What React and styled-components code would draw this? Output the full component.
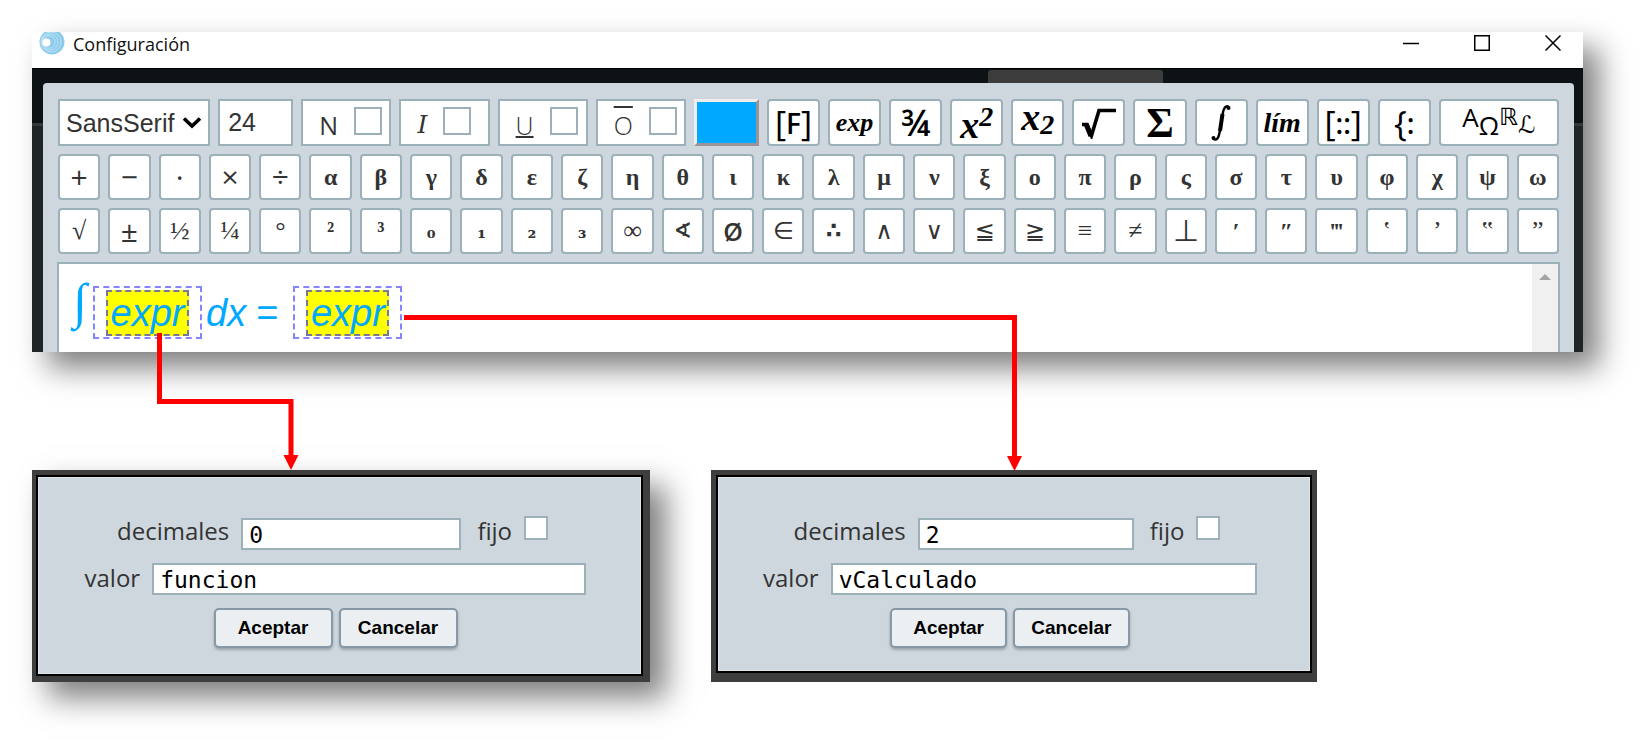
import { useState } from "react";
import styled, { createGlobalStyle } from "styled-components";

const TEXT = `"Open Sans", "Noto Sans", sans-serif`;
const SERIF = `"Liberation Serif", "DejaVu Serif", serif`;
const SANS = `"Liberation Sans", Arial, sans-serif`;
const MONO = `"DejaVu Sans Mono", monospace`;

const greekRow = [
  { char: "+", face: "operator" },
  { char: "−", face: "operator" },
  { char: "·", face: "operator" },
  { char: "×", face: "operator" },
  { char: "÷", face: "operator" },
  ..."αβγδεζηθικλμνξοπρςστυφχψω".split("").map((char) => ({ char, face: "bold" })),
];

const symbolRow = [
  { char: "√", face: "thin" },
  { char: "±", face: "operator" },
  { char: "½", face: "thin" },
  { char: "¼", face: "thin" },
  { char: "°", face: "thin" },
  { char: "²", face: "bold" },
  { char: "³", face: "bold" },
  { char: "₀", face: "sub" },
  { char: "₁", face: "sub" },
  { char: "₂", face: "sub" },
  { char: "₃", face: "sub" },
  { char: "∞", face: "thin" },
  { char: "∢", face: "mathBold" },
  { char: "Ø", face: "letter" },
  { char: "∈", face: "math" },
  { char: "∴", face: "mathBold" },
  { char: "∧", face: "math" },
  { char: "∨", face: "math" },
  { char: "≦", face: "math" },
  { char: "≧", face: "math" },
  { char: "≡", face: "thin" },
  { char: "≠", face: "thin" },
  { char: "⊥", face: "wide" },
  { char: "′", face: "bold" },
  { char: "″", face: "bold" },
  { char: "‴", face: "bold" },
  { char: "‛", face: "thin" },
  { char: "’", face: "thin" },
  { char: "‟", face: "thin" },
  { char: "”", face: "thin" },
];

const styleToggles = [
  { id: "bold", mark: "N" },
  { id: "italic", mark: "I" },
  { id: "underline", mark: "U" },
  { id: "overline", mark: "O" },
];

const Toolbar = () => {
  const [font, setFont] = useState("SansSerif");
  const [size, setSize] = useState("24");

  return (
    <>
      <FormatRow>
        <SelectBox>
          <select
            aria-label="fuente"
            value={font}
            onChange={(e) => setFont(e.target.value)}
          >
            <option>SansSerif</option>
            <option>Serif</option>
            <option>Monospaced</option>
          </select>
          <svg width="20" height="13" viewBox="0 0 20 13">
            <path d="M2 2.5l8 7.5 8-7.5" fill="none" stroke="#000" strokeWidth="3.6" />
          </svg>
        </SelectBox>
        <SizeInput
          aria-label="tamaño"
          value={size}
          onChange={(e) => setSize(e.target.value)}
        />
        {styleToggles.map(({ id, mark }) => (
          <Toggle key={id}>
            <Mark $kind={id}>{mark}</Mark>
            <input type="checkbox" />
          </Toggle>
        ))}
        <ColorButton aria-label="color" />
        <ToolButton>
          <Fence>[</Fence>F<Fence>]</Fence>
        </ToolButton>
        <ToolButton>
          <MathText $size={26}>exp</MathText>
        </ToolButton>
        <ToolButton>
          <Fraction>¾</Fraction>
        </ToolButton>
        <ToolButton>
          <Script>
            <MathText $size={38} $align="flex-end">x</MathText>
            <MathText $size={28} $align="flex-start">2</MathText>
          </Script>
        </ToolButton>
        <ToolButton>
          <Script>
            <MathText $size={38} $align="flex-start">x</MathText>
            <MathText $size={28} $align="flex-end">2</MathText>
          </Script>
        </ToolButton>
        <ToolButton aria-label="raíz">
          <svg width="36" height="32" viewBox="0 0 36 32">
            <path d="M1 17.5h5l4.5 11L18 3.5h17" fill="none" stroke="#000" strokeWidth="3.6" />
            <path d="M5 17l5 12" stroke="#000" strokeWidth="5" />
          </svg>
        </ToolButton>
        <ToolButton>
          <MathText $size={42} $upright>Σ</MathText>
        </ToolButton>
        <ToolButton aria-label="integral">
          <svg width="20" height="38" viewBox="0 0 20 38">
            <path
              d="M2 34.500C6 38 8 33 9 26L11.500 11C12.500 4 15 0 18.500 3.500"
              fill="none"
              stroke="#000"
              strokeWidth="2.4"
            />
            <path d="M9 27L11.500 10" stroke="#000" strokeWidth="4" />
            <circle cx="2.500" cy="34" r="2" />
            <circle cx="17.500" cy="4" r="2" />
          </svg>
        </ToolButton>
        <ToolButton>
          <MathText $size={28}>lím</MathText>
        </ToolButton>
        <ToolButton>
          <Fence>[</Fence>::<Fence>]</Fence>
        </ToolButton>
        <ToolButton>
          <Fence>{"{"}</Fence>:
        </ToolButton>
        <ToolButton>
          <Alphabets>
            <span>A</span>
            <span>Ω</span>
            <span>ℝ</span>
            <span>ℒ</span>
          </Alphabets>
        </ToolButton>
      </FormatRow>
      {[greekRow, symbolRow].map((row, i) => (
        <SymbolRow key={i}>
          {row.map(({ char, face }) => (
            <SymbolButton key={char} $face={face}>
              {char}
            </SymbolButton>
          ))}
        </SymbolRow>
      ))}
    </>
  );
};

const ValueDialog = ({ id, decimals, value, inset }) => (
  <DialogFrame $inset={inset}>
    <DialogBody>
      <FieldRow>
        <label htmlFor={`${id}-decimales`}>decimales</label>
        <TextInput id={`${id}-decimales`} $width="37%" defaultValue={decimals} />
        <FixedLabel htmlFor={`${id}-fijo`}>fijo</FixedLabel>
        <CheckBox id={`${id}-fijo`} type="checkbox" />
      </FieldRow>
      <FieldRow>
        <label htmlFor={`${id}-valor`}>valor</label>
        <TextInput id={`${id}-valor`} $width="73%" defaultValue={value} />
      </FieldRow>
      <Actions>
        <ActionButton>Aceptar</ActionButton>
        <ActionButton>Cancelar</ActionButton>
      </Actions>
    </DialogBody>
  </DialogFrame>
);

const App = () => {
  return (
    <Page>
      <GlobalStyle />
      <Window>
        <TitleBar>
          <svg width="26" height="24" viewBox="0 0 26 24">
            <circle cx="13" cy="10" r="12.5" fill="#8ccbea" />
            <g fill="none" stroke="#c9e8f7" strokeWidth="0.8">
              <circle cx="12" cy="10" r="10" />
              <circle cx="11" cy="10" r="8" />
              <circle cx="10" cy="10" r="6.2" />
            </g>
            <circle cx="7.5" cy="10.5" r="4" fill="#fff" />
          </svg>
          <h1>Configuración</h1>
          <WindowButtons>
            <button aria-label="minimizar">
              <svg width="16" height="16" viewBox="0 0 16 16">
                <path d="M0 8.5h16" />
              </svg>
            </button>
            <button aria-label="maximizar">
              <svg width="16" height="16" viewBox="0 0 16 16">
                <path d="M.75.75h14.5v14.5H.75z" />
              </svg>
            </button>
            <button aria-label="cerrar">
              <svg width="16" height="16" viewBox="0 0 16 16">
                <path d="M.5.5l15 15M15.5.5l-15 15" />
              </svg>
            </button>
          </WindowButtons>
        </TitleBar>
        <Backdrop>
          <BackTab />
          <Panel>
            <Toolbar />
            <Editor>
              <Formula>
                <Integral>∫</Integral>
                <ExprBox>
                  <span>expr</span>
                </ExprBox>
                <span>dx</span>
                <Equals>=</Equals>
                <ExprBox>
                  <span>expr</span>
                </ExprBox>
              </Formula>
              <ScrollTrack>
                <svg width="12" height="6" viewBox="0 0 12 6">
                  <path d="M0 6l6-6 6 6z" fill="#a3a3a3" />
                </svg>
              </ScrollTrack>
            </Editor>
          </Panel>
        </Backdrop>
      </Window>
      <Dialogs>
        <ShadowBox>
          <ValueDialog id="f" decimals="0" value="funcion" inset="5px 7px 6px 4px" />
        </ShadowBox>
        <ValueDialog id="v" decimals="2" value="vCalculado" inset="5px 5px 9px 5px" />
      </Dialogs>
      {/* connectors from each expr to its dialog */}
      <Arrows width="1030" height="472" viewBox="0 0 1030 472">
        <path d="M159.500 333V401.500H291V458" />
        <path d="M404 317.500H1014.500V458" />
        <polygon points="283.500,455 298.500,455 291,470" />
        <polygon points="1007,456 1022,456 1014.500,471" />
      </Arrows>
    </Page>
  );
};

const GlobalStyle = createGlobalStyle`
  * {
    box-sizing: border-box;
  }
  body {
    margin: 0;
    background: #fff;
    font-family: ${TEXT};
  }
  button, input, select {
    margin: 0;
    color: inherit;
    font: inherit;
  }
`;

const Page = styled.main`
  position: relative;
  display: flex;
  flex-direction: column;
  gap: 118px;
  padding: 32px 65px 65px 32px;
`;

const ShadowBox = styled.div`
  box-shadow: 16px 16px 28px rgba(0, 0, 0, 0.5);
`;

const Window = styled(ShadowBox)`
  background: #fff;
`;

const TitleBar = styled.header`
  display: flex;
  align-items: flex-start;
  height: 36px;
  padding: 0 22px 0 7px;

  h1 {
    margin: 0 0 0 8px;
    color: #111;
    font-size: 18px;
    font-weight: 400;
    line-height: 24px;
  }
`;

const WindowButtons = styled.div`
  display: flex;
  gap: 55px;
  margin: 3px 0 0 auto;

  button {
    display: flex;
    padding: 0;
    border: none;
    background: none;
  }
  path {
    fill: none;
    stroke: #000;
    stroke-width: 1.5;
  }
`;

const Backdrop = styled.div`
  padding: 0 9px 0 11px;
  border-top: 1px solid #000;
  background: linear-gradient(#0d1214 54px, #35383a 54px 57px, #1f2427 57px);
`;

const BackTab = styled.div`
  width: 175px;
  height: 13px;
  margin: 1px 411px 0 auto;
  border-radius: 3px 3px 0 0;
  background: #3c3c3d;
`;

const Panel = styled.section`
  display: flex;
  flex-direction: column;
  gap: 8px;
  padding: 16px 14px 0;
  border-radius: 4px 4px 0 0;
  background: #cfd7de;
`;

const FormatRow = styled.div`
  display: grid;
  grid-template-columns: 152fr 75fr repeat(4, 90fr) 65fr repeat(11, 53fr) 120fr;
  gap: 8px;
  padding: 0 1px;

  & > * {
    min-width: 0;
    height: 47px;
  }
`;

const SelectBox = styled.div`
  position: relative;

  select {
    width: 100%;
    height: 100%;
    padding: 0 28px 0 6px;
    border: 2px solid #9bb0b9;
    border-radius: 0;
    appearance: none;
    background: #fff;
    color: #333;
    font: 25px ${SANS};
  }
  svg {
    position: absolute;
    top: 17px;
    right: 8px;
    pointer-events: none;
  }
`;

const SizeInput = styled.input`
  padding: 0 8px;
  border: 2px solid #9bb0b9;
  color: #333;
  font: 25px ${SANS};
`;

const CheckBox = styled.input`
  flex: none;
  width: 24px;
  height: 24px;
  margin: 0 6px 0 0;
  border: 2px solid #9bb0b9;
  appearance: none;
  background: #fff;

  &:checked {
    background: #9bb0b9;
  }
`;

const Toggle = styled.label`
  display: flex;
  align-items: flex-start;
  gap: 16px;
  padding: 6px 0 0 16px;
  border: 2px solid #9bb0b9;
  background: #fff;

  input {
    flex: none;
    width: 28px;
    height: 28px;
    border: 2px solid #9bb0b9;
    appearance: none;
  }
  input:checked {
    background: #9bb0b9;
  }
`;

const Mark = styled.span`
  color: #333;
  font-family: ${({ $kind }) => ($kind === "italic" ? `"DejaVu Serif", serif` : TEXT)};
  font-size: 25px;
  font-style: ${({ $kind }) => ($kind === "italic" ? "italic" : "normal")};
  font-weight: ${({ $kind }) => ($kind === "bold" ? 400 : 300)};
  line-height: 36px;
  text-decoration: ${({ $kind }) =>
    $kind === "underline" || $kind === "overline" ? $kind : "none"};
  text-decoration-thickness: 2px;
`;

const ColorButton = styled.button`
  padding: 0;
  border: 3px solid;
  border-color: #f0eded #9c9498 #9c9498 #f0eded;
  background: #00a8ff;
`;

const ToolButton = styled.button`
  display: flex;
  align-items: center;
  justify-content: center;
  padding: 0;
  border: 2px solid #9bb0b9;
  border-radius: 4px;
  background: #fff;
  color: #000;
  font: 600 28px / 1 ${TEXT};
`;

const Fence = styled.span`
  font-size: 34px;
  font-weight: 400;
  line-height: 34px;
`;

const MathText = styled.span`
  align-self: ${({ $align }) => $align || "center"};
  font: bold ${({ $size }) => $size}px / 1 ${SERIF};
  font-style: ${({ $upright }) => ($upright ? "normal" : "italic")};
  line-height: 28px;
`;

const Fraction = styled.span`
  font-size: 36px;
`;

const Script = styled.span`
  display: flex;
  height: 36px;
  margin-bottom: 4px;
`;

const Alphabets = styled.span`
  display: flex;
  height: 34px;
  margin-bottom: 4px;
  font-size: 26px;
  font-weight: 400;
  line-height: 26px;

  span:nth-child(even) {
    align-self: flex-end;
  }
  span:nth-child(n + 3) {
    font-family: "DejaVu Sans", sans-serif;
    font-size: 24px;
  }
`;

const SymbolRow = styled.div`
  display: grid;
  grid-template-columns: repeat(30, minmax(0, 1fr));
  gap: 8px;
  padding: 0 1px;
`;

const faces = {
  bold: `bold 24px / 1 ${SERIF}`,
  thin: `26px / 1 ${SERIF}`,
  operator: `30px / 1 ${TEXT}`,
  letter: `600 25px / 1 ${TEXT}`,
  sub: `bold 20px / 1 "DejaVu Serif", serif`,
  math: `24px / 1 "DejaVu Sans", sans-serif`,
  mathBold: `bold 22px / 1 "DejaVu Sans", sans-serif`,
  wide: `30px / 1 "DejaVu Sans", sans-serif`,
};

const SymbolButton = styled.button`
  height: 46px;
  padding: 0;
  border: 2px solid #9bb0b9;
  border-radius: 4px;
  background: #fff;
  color: #333;
  font: ${({ $face }) => faces[$face]};
`;

const Editor = styled.div`
  display: flex;
  justify-content: space-between;
  height: 90px;
  border: 2px solid #9bb0b9;
  border-bottom: none;
  background: #fff;
`;

const Formula = styled.div`
  display: flex;
  align-items: center;
  height: 53px;
  margin: 22px 0 0 14px;
  color: #00a8ff;
  font: italic 38px / 1 ${SANS};
`;

const Integral = styled.span`
  width: 20px;
  font: 50px / 1 ${SERIF};
  line-height: 76px;
  align-self: flex-end;
`;

const ExprBox = styled.span`
  display: flex;
  align-items: center;
  justify-content: center;
  width: 109px;
  height: 53px;
  margin-right: 4px;
  border: 2px dashed #8484ff;

  span {
    width: 83px;
    height: 46px;
    border: 2px dashed #77779a;
    background: #ff0;
    line-height: 42px;
    text-align: center;
  }
`;

const Equals = styled.span`
  margin: 0 15px 0 10px;
  font-style: normal;
`;

const ScrollTrack = styled.div`
  display: flex;
  justify-content: center;
  width: 26px;
  padding-top: 10px;
  background: #f0f0f0;
`;

const Dialogs = styled.div`
  display: grid;
  grid-template-columns: 618fr 606fr 205fr;
  gap: 61px;
`;

const DialogFrame = styled.section`
  display: flex;
  height: 100%;
  padding: ${({ $inset }) => $inset};
  background: #3e3e3e;
`;

const DialogBody = styled.div`
  display: flex;
  flex: 1;
  flex-direction: column;
  gap: 13px;
  min-width: 0;
  padding: 39px 8px 23px 0;
  border: 2px solid #000;
  box-shadow: inset 0 0 0 1px #dde4ea;
  background: #cfd7de;
  color: #333;
  font-size: 24px;
  line-height: 30px;
`;

const FieldRow = styled.div`
  display: flex;
  align-items: flex-start;
  justify-content: center;
  gap: 12px;

  &:first-child {
    height: 34px;
  }
`;

const FixedLabel = styled.label`
  margin-left: 4px;
`;

const TextInput = styled.input`
  align-self: flex-end;
  width: ${({ $width }) => $width};
  height: 32px;
  padding: 2px 6px 0;
  border: 2px solid #9bb0b9;
  background: #fff;
  color: #000;
  font: 23px ${MONO};
`;

const Actions = styled.div`
  display: flex;
  justify-content: center;
  gap: 6px;
`;

const ActionButton = styled.button`
  width: 20%;
  height: 40px;
  padding: 0;
  border: 2px solid #8798a6;
  border-radius: 5px;
  box-shadow: 0 2px 3px rgba(0, 0, 0, 0.25);
  background: #ebeff2;
  color: #000;
  font: bold 19px ${SANS};
`;

const Arrows = styled.svg`
  position: absolute;
  top: 0;
  left: 0;
  pointer-events: none;

  path {
    fill: none;
    stroke: #f00;
    stroke-width: 5;
  }
  polygon {
    fill: #f00;
  }
`;

export default App;
